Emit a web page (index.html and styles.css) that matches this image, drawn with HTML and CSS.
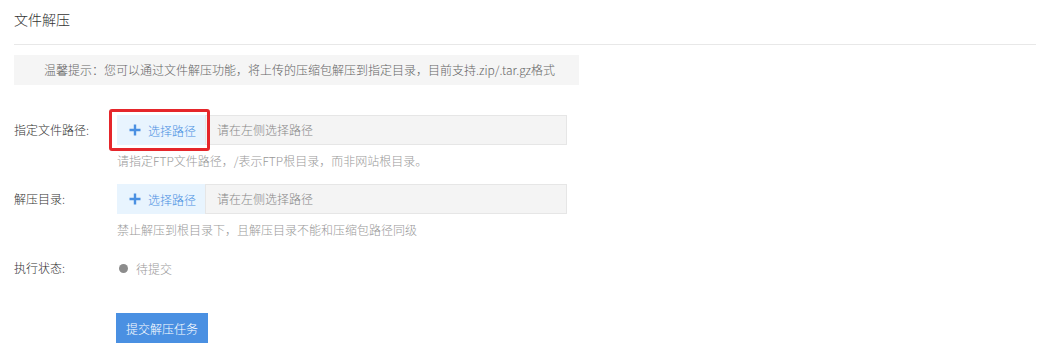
FILE: index.html
```html
<!DOCTYPE html>
<html lang="zh-CN">
<head>
<meta charset="utf-8">
<link rel="stylesheet" href="styles.css">
</head>
<body>
<div class="page">
  <div class="title">文件解压</div>
  <div class="tip">温馨提示：您可以通过文件解压功能，将上传的压缩包解压到指定目录，目前支持.zip/.tar.gz格式</div>

  <div class="form">
    <div class="row">
      <div class="label">指定文件路径:</div>
      <div class="field">
        <div class="group">
          <div class="pick">
            <svg class="plus" width="12" height="12" viewBox="0 0 12 12"><path d="M6 0.5v11M0.5 6h11" stroke="#4a90e2" stroke-width="2.4" fill="none"/></svg>
            <span>选择路径</span>
          </div>
          <div class="input">请在左侧选择路径</div>
          <div class="highlight"></div>
        </div>
        <div class="hint">请指定FTP文件路径，/表示FTP根目录，而非网站根目录。</div>
      </div>
    </div>

    <div class="row row2">
      <div class="label">解压目录:</div>
      <div class="field">
        <div class="group">
          <div class="pick">
            <svg class="plus" width="12" height="12" viewBox="0 0 12 12"><path d="M6 0.5v11M0.5 6h11" stroke="#4a90e2" stroke-width="2.4" fill="none"/></svg>
            <span>选择路径</span>
          </div>
          <div class="input">请在左侧选择路径</div>
        </div>
        <div class="hint">禁止解压到根目录下，且解压目录不能和压缩包路径同级</div>
      </div>
    </div>

    <div class="row row3">
      <div class="label">执行状态:</div>
      <div class="field status"><span class="dot"></span><span>待提交</span></div>
    </div>

    <div class="row row4">
      <div class="label"></div>
      <div class="field"><button class="submit">提交解压任务</button></div>
    </div>
  </div>
</div>
</body>
</html>
```

FILE: styles.css
```css
* { box-sizing: border-box; }
html, body { margin: 0; padding: 0; background: #fff; }
body {
  font-family: "Noto Sans CJK SC", "Noto Sans", sans-serif;
  font-size: 12px;
  font-weight: 300;
  color: #333;
}
.page { padding: 0 16px 0 14px; }
.title {
  font-size: 14px;
  line-height: 18px;
  padding: 10px 0 16px;
  border-bottom: 1px solid #e8e8e8;
  color: #333;
}
.tip {
  margin-top: 10px;
  width: 565px;
  height: 30px;
  line-height: 30px;
  padding-left: 30px;
  background: #f5f5f5;
  color: #666;
}
.form { margin-top: 30px; }
.row { display: flex; align-items: flex-start; }
.row2 { margin-top: 15px; }
.row3 { margin-top: 15px; }
.row4 { margin-top: 30px; }
.label {
  width: 103px;
  flex: none;
  height: 30px;
  line-height: 30px;
  color: #333;
}
.field { display: flex; flex-direction: column; }
.group {
  position: relative;
  display: flex;
  width: 450px;
  height: 30px;
}
.pick {
  width: 88px;
  flex: none;
  display: flex;
  align-items: center;
  gap: 7px;
  padding-left: 12px;
  background: #e8f4fe;
  color: #4a90e2;
}
.plus { display: block; }
.input {
  flex: 1;
  background: #f4f4f4;
  border: 1px solid #e6e6e6;
  line-height: 28px;
  padding-left: 11px;
  color: #888;
}
.highlight {
  position: absolute;
  left: -8px;
  top: -6px;
  width: 101px;
  height: 42px;
  border: 3px solid #e5262b;
  border-radius: 3px;
}
.hint {
  margin-top: 8px;
  line-height: 16px;
  color: #999;
}
.status {
  flex-direction: row;
  align-items: center;
  height: 30px;
  color: #999;
}
.dot {
  width: 9px;
  height: 9px;
  border-radius: 50%;
  background: #8c8c8c;
  margin: 0 8px 0 2px;
}
.submit {
  width: 92px;
  height: 30px;
  border: none;
  background: #4a90e2;
  color: #fff;
  font-family: inherit;
  font-size: 12px;
  font-weight: 300;
  padding: 0;
  margin-left: -1px;
}
```
